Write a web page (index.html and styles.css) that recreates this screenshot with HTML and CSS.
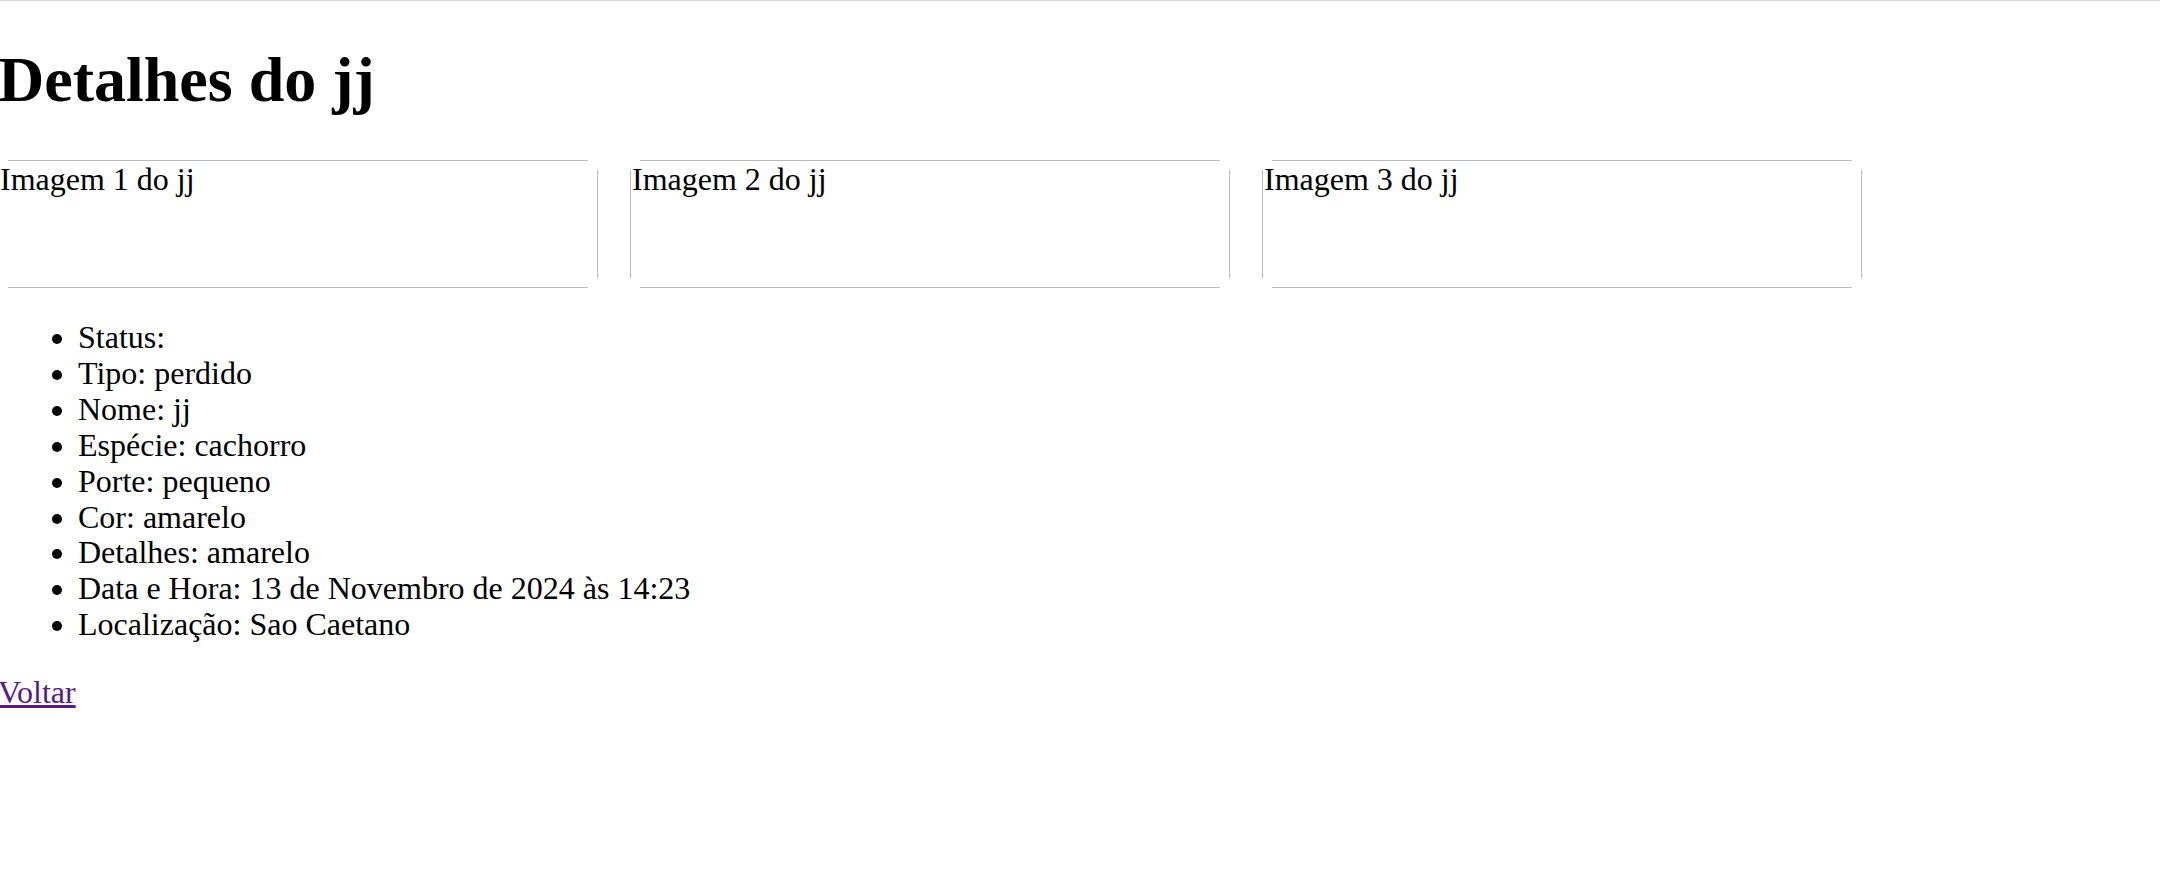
FILE: index.html
```html
<!DOCTYPE html>
<html lang="pt-BR">
<head>
<meta charset="utf-8">
<title>Detalhes do jj</title>
<link rel="stylesheet" href="styles.css">
</head>
<body>
<h1 class="title">Detalhes do jj</h1>
<div class="gallery">
  <div class="img-box">Imagem 1 do jj</div>
  <div class="img-box">Imagem 2 do jj</div>
  <div class="img-box">Imagem 3 do jj</div>
</div>
<ul class="details">
  <li>Status: </li>
  <li>Tipo: perdido</li>
  <li>Nome: jj</li>
  <li>Espécie: cachorro</li>
  <li>Porte: pequeno</li>
  <li>Cor: amarelo</li>
  <li>Detalhes: amarelo</li>
  <li>Data e Hora: 13 de Novembro de 2024 às 14:23</li>
  <li>Localização: Sao Caetano</li>
</ul>
<p class="back"><a href="#" class="back-link">Voltar</a></p>
</body>
</html>
```
FILE: styles.css
```css
html {
  background: #fff;
}
body {
  margin: 0 0 0 -2px;
  border-top: 1px solid #d6d6d6;
  font-family: "Liberation Serif", "Times New Roman", serif;
  font-size: 32px;
  line-height: 35.9px;
  color: #000;
}
.title {
  font-size: 64px;
  font-weight: bold;
  line-height: 72px;
  margin: 43px 0 44px;
}
.gallery {
  display: flex;
  gap: 32px;
}
.img-box {
  box-sizing: border-box;
  width: 600px;
  height: 128px;
  padding: 2px 2px 0;
  line-height: 35.9px;
  background:
    linear-gradient(#bababa, #bababa) center top / calc(100% - 20px) 1px no-repeat,
    linear-gradient(#bababa, #bababa) center bottom / calc(100% - 20px) 1px no-repeat,
    linear-gradient(#bababa, #bababa) left center / 1px calc(100% - 20px) no-repeat,
    linear-gradient(#bababa, #bababa) right center / 1px calc(100% - 20px) no-repeat;
}
.details {
  margin: 32px 0;
  padding-left: 80px;
  list-style: disc;
}
.back {
  margin: 32px 0;
}
.back-link {
  color: #551a8b;
}
```
